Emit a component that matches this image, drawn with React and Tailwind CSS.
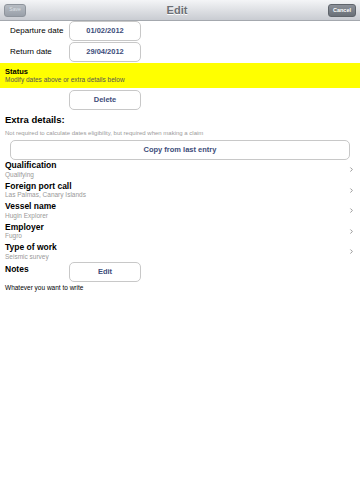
import { ChevronRight } from "lucide-react";

const font = { fontFamily: '"Liberation Sans", Arial, sans-serif' };

function WhiteButton({ children, className = "" }) {
  return (
    <button
      className={`flex items-center justify-center rounded-[5px] border border-[#c8c8c8] bg-white text-[7.5px] font-bold text-[#3d4d7a] ${className}`}
    >
      {children}
    </button>
  );
}

function DetailRow({ title, value }) {
  return (
    <div className="flex h-[20.5px] items-center pl-[5px] pr-[5px]">
      <div className="flex-1 leading-none">
        <div className="text-[8.5px] font-bold text-black">{title}</div>
        <div className="mt-[2px] text-[6.5px] text-[#999]">{value}</div>
      </div>
      <ChevronRight className="h-[7px] w-[7px] text-[#8a8a8a]" strokeWidth={3} />
    </div>
  );
}

export default function App() {
  return (
    <div className="h-[480px] w-[360px] bg-white" style={font}>
      {/* Nav bar */}
      <div className="flex h-[21px] items-center justify-between border-b border-[#a4a8ae] bg-gradient-to-b from-[#f4f5f7] to-[#c9ccd2] px-[4px]">
        <button className="flex h-[13px] w-[22px] items-center justify-center rounded-[3px] border border-[#8e949c] bg-gradient-to-b from-[#b7bcc3] to-[#99a0a9] text-[5px] text-[#dfe2e6]">
          Save
        </button>
        <div className="text-[11px] font-bold text-[#6b6f75] [text-shadow:0_1px_0_#fff]">Edit</div>
        <button className="flex h-[13px] w-[28px] items-center justify-center rounded-[3px] border border-[#5f646b] bg-gradient-to-b from-[#8c9199] to-[#6a7078] text-[5.5px] font-bold text-white">
          Cancel
        </button>
      </div>

      {/* Dates */}
      <div className="flex h-[20px] items-center">
        <div className="w-[69px] whitespace-nowrap pl-[10px] text-[8px] text-black">Departure date</div>
        <WhiteButton className="h-[20px] w-[72px]">01/02/2012</WhiteButton>
      </div>
      <div className="mt-[1px] flex h-[20px] items-center">
        <div className="w-[69px] whitespace-nowrap pl-[10px] text-[8px] text-black">Return date</div>
        <WhiteButton className="h-[20px] w-[72px]">29/04/2012</WhiteButton>
      </div>

      {/* Status */}
      <div className="mt-[1px] flex h-[25px] flex-col justify-center bg-[#ffff00] pl-[5px] leading-none">
        <div className="text-[7.5px] font-bold text-black">Status</div>
        <div className="mt-[2px] text-[6.5px] text-[#555]">Modify dates above or extra details below</div>
      </div>

      <div className="mt-[2px] pl-[69px]">
        <WhiteButton className="h-[20px] w-[72px]">Delete</WhiteButton>
      </div>

      {/* Extra details */}
      <div className="mt-[5px] pl-[5px] leading-none">
        <div className="text-[9.5px] font-bold text-black">Extra details:</div>
        <div className="mt-[5px] text-[6px] text-[#9a9a9a]">
          Not required to calculate dates eligibility, but required when making a claim
        </div>
      </div>

      <div className="mt-[4px] px-[10px]">
        <WhiteButton className="h-[20px] w-full">Copy from last entry</WhiteButton>
      </div>

      <DetailRow title="Qualification" value="Qualifying" />
      <DetailRow title="Foreign port call" value="Las Palmas, Canary Islands" />
      <DetailRow title="Vessel name" value="Hugin Explorer" />
      <DetailRow title="Employer" value="Fugro" />
      <DetailRow title="Type of work" value="Seismic survey" />

      {/* Notes */}
      <div className="flex h-[20px] items-start">
        <div className="w-[69px] pl-[5px] pt-[1px] text-[8.5px] font-bold text-black">Notes</div>
        <WhiteButton className="h-[20px] w-[72px]">Edit</WhiteButton>
      </div>
      <div className="mt-[1px] pl-[5px] text-[6.5px] text-black">Whatever you want to write</div>
    </div>
  );
}
